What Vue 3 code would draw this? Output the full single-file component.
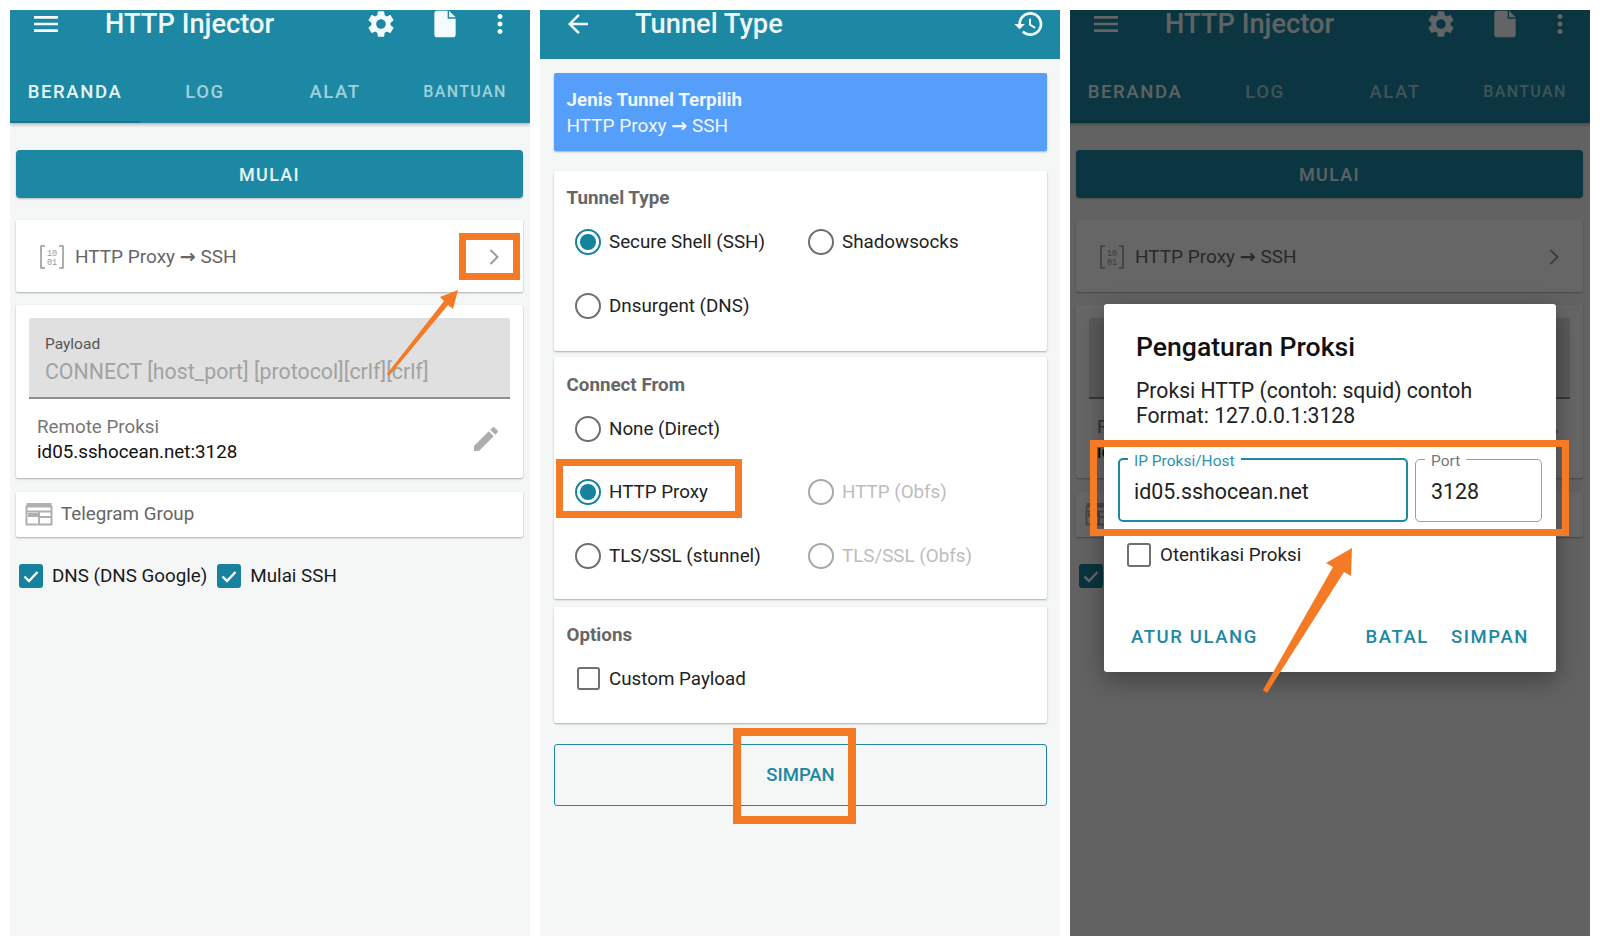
<script setup>
const homePanels = [{ dimmed: false }, { dimmed: true }];
const tabs = ['BERANDA', 'LOG', 'ALAT', 'BANTUAN'];

const icons = {
  menu: 'M3 18h18v-2H3v2zm0-5h18v-2H3v2zm0-7v2h18V6H3z',
  gear: 'M19.14 12.94c.04-.3.06-.61.06-.94 0-.32-.02-.64-.07-.94l2.03-1.58c.18-.14.23-.41.12-.61l-1.92-3.32c-.12-.22-.37-.29-.59-.22l-2.39.96c-.5-.38-1.03-.7-1.62-.94l-.36-2.54c-.04-.24-.24-.41-.48-.41h-3.84c-.24 0-.43.17-.47.41l-.36 2.54c-.59.24-1.13.57-1.62.94l-2.39-.96c-.22-.08-.47 0-.59.22L2.74 8.87c-.12.21-.08.47.12.61l2.03 1.58c-.05.3-.09.63-.09.94s.02.64.07.94l-2.03 1.58c-.18.14-.23.41-.12.61l1.92 3.32c.12.22.37.29.59.22l2.39-.96c.5.38 1.03.7 1.62.94l.36 2.54c.05.24.24.41.48.41h3.84c.24 0 .44-.17.47-.41l.36-2.54c.59-.24 1.13-.56 1.62-.94l2.39.96c.22.08.47 0 .59-.22l1.92-3.32c.12-.22.07-.47-.12-.61l-2.01-1.58zM12 15.6c-1.98 0-3.6-1.62-3.6-3.6s1.62-3.6 3.6-3.6 3.6 1.62 3.6 3.6-1.62 3.6-3.6 3.6z',
  file: 'M6 2c-1.1 0-2 .9-2 2v16c0 1.1.9 2 2 2h12c1.1 0 2-.9 2-2V8h-6V2H6zm9 0v5h5l-5-5z',
  more: 'M12 8c1.1 0 2-.9 2-2s-.9-2-2-2-2 .9-2 2 .9 2 2 2zm0 2c-1.1 0-2 .9-2 2s.9 2 2 2 2-.9 2-2-.9-2-2-2zm0 6c-1.1 0-2 .9-2 2s.9 2 2 2 2-.9 2-2-.9-2-2-2z',
  back: 'M20 11H7.83l5.59-5.59L12 4l-8 8 8 8 1.41-1.41L7.83 13H20v-2z',
  history: 'M13 3c-4.97 0-9 4.03-9 9H1l3.89 3.89.07.14L9 12H6c0-3.87 3.13-7 7-7s7 3.13 7 7-3.13 7-7 7c-1.93 0-3.68-.79-4.94-2.06l-1.42 1.42C8.27 19.99 10.51 21 13 21c4.97 0 9-4.03 9-9s-4.03-9-9-9zm-1 5v5l4.28 2.54.72-1.21-3.5-2.08V8H12z',
  edit: 'M3 17.25V21h3.75L17.81 9.94l-3.75-3.75L3 17.25zM20.71 7.04c.39-.39.39-1.02 0-1.41l-2.34-2.34c-.39-.39-1.02-.39-1.41 0l-1.83 1.83 3.75 3.75 1.83-1.83z',
};

const tunnelTypes = [
  { label: 'Secure Shell (SSH)', checked: true },
  { label: 'Shadowsocks' },
  { label: 'Dnsurgent (DNS)' },
];
const connectFrom = [
  { label: 'None (Direct)', wide: true },
  { label: 'HTTP Proxy', checked: true },
  { label: 'HTTP (Obfs)', disabled: true },
  { label: 'TLS/SSL (stunnel)' },
  { label: 'TLS/SSL (Obfs)', disabled: true },
];
</script>

<template>
  <div class="shots">
    <section
      v-for="panel in homePanels"
      :key="panel.dimmed"
      class="panel"
      :class="panel.dimmed ? 'panel--last' : 'panel--first'"
    >
      <header class="appbar">
        <div class="toolbar">
          <svg class="tool tool--nav" viewBox="0 0 24 24"><path :d="icons.menu" /></svg>
          <h1 class="title">HTTP Injector</h1>
          <svg class="tool tool--gear" viewBox="0 0 24 24"><path :d="icons.gear" /></svg>
          <svg class="tool tool--file" viewBox="0 0 24 24"><path :d="icons.file" /></svg>
          <svg class="tool tool--more" viewBox="0 0 24 24"><path :d="icons.more" /></svg>
        </div>
        <nav class="tabs">
          <span
            v-for="(tab, i) in tabs"
            :key="tab"
            class="tab"
            :class="{ 'tab--active': i === 0, 'tab--small': i === 3 }"
          >{{ tab }}</span>
        </nav>
      </header>

      <div class="home">
        <button class="start">MULAI</button>

        <div class="card tunnel-row">
          <svg class="binary" viewBox="0 0 26 26">
            <path d="M6 2H2v22h4M20 2h4v22h-4" />
            <text x="13" y="11.5" text-anchor="middle">10</text>
            <text x="13" y="20.5" text-anchor="middle">01</text>
          </svg>
          <span class="row-text">HTTP Proxy <span class="to">→</span> SSH</span>
          <svg class="chevron" viewBox="0 0 12 18"><path d="M2.5 2l7 7-7 7" /></svg>
        </div>

        <div class="card proxy-card">
          <div class="payload">
            <span class="payload-label">Payload</span>
            <span class="payload-value">CONNECT [host_port] [protocol][crlf][crlf]</span>
          </div>
          <div class="remote">
            <div>
              <div class="remote-label">Remote Proksi</div>
              <div class="remote-value">id05.sshocean.net:3128</div>
            </div>
            <svg class="pencil" viewBox="0 0 24 24"><path :d="icons.edit" /></svg>
          </div>
        </div>

        <div class="card group-row">
          <svg class="group-icon" viewBox="0 0 28 24">
            <path d="M1.5 4.5h25v18h-25zM1.5 9.5h25M14 15h12.5M14 9.5v13" />
            <path class="group-fill" d="M3 11h10v4H3zM1.5 1h25v3h-25z" />
          </svg>
          <span class="row-text">Telegram Group</span>
        </div>

        <div class="checks">
          <span class="check check--on">
            <svg viewBox="0 0 24 24"><path d="M5.5 12.5l4.5 4.5 8.5-9" /></svg>
          </span>
          <span class="check-label">DNS (DNS Google)</span>
          <span class="check check--on">
            <svg viewBox="0 0 24 24"><path d="M5.5 12.5l4.5 4.5 8.5-9" /></svg>
          </span>
          <span class="check-label">Mulai SSH</span>
        </div>
      </div>

      <template v-if="!panel.dimmed">
        <div class="mark mark--chevron"></div>
        <svg class="arrow" viewBox="0 0 520 926">
          <path d="M377 364L379 366L438 295L443 299L448 280L430 287L434 291Z" />
        </svg>
      </template>

      <template v-else>
        <div class="scrim"></div>
        <div class="dialog">
          <h2 class="dialog-title">Pengaturan Proksi</h2>
          <p class="dialog-text">Proksi HTTP (contoh: squid) contoh<br />Format: 127.0.0.1:3128</p>
          <div class="fields">
            <fieldset class="field field--focus">
              <legend>IP Proksi/Host</legend>
              <span>id05.sshocean.net</span>
            </fieldset>
            <fieldset class="field field--port">
              <legend>Port</legend>
              <span>3128</span>
            </fieldset>
          </div>
          <div class="auth">
            <span class="check"></span>
            <span class="auth-label">Otentikasi Proksi</span>
          </div>
          <div class="actions">
            <span>ATUR ULANG</span>
            <span class="actions-right"><span>BATAL</span><span>SIMPAN</span></span>
          </div>
        </div>
        <div class="mark mark--fields"></div>
        <svg class="arrow" viewBox="0 0 520 926">
          <path d="M193 680L197 683L274 562L281 566L282 538L256 553L263 557Z" />
        </svg>
      </template>
    </section>

    <section class="panel panel--middle">
      <header class="appbar appbar--plain">
        <div class="toolbar">
          <svg class="tool tool--back" viewBox="0 0 24 24"><path :d="icons.back" /></svg>
          <h1 class="title">Tunnel Type</h1>
          <svg class="tool tool--history" viewBox="0 0 24 24"><path :d="icons.history" /></svg>
        </div>
      </header>

      <div class="tunnel">
        <div class="selected">
          <strong>Jenis Tunnel Terpilih</strong>
          <span>HTTP Proxy <span class="to">→</span> SSH</span>
        </div>

        <div class="card group group--types">
          <h3 class="group-title">Tunnel Type</h3>
          <div class="options">
            <label
              v-for="item in tunnelTypes"
              :key="item.label"
              class="option"
            >
              <span class="radio" :class="{ 'radio--on': item.checked }"></span>
              {{ item.label }}
            </label>
          </div>
        </div>

        <div class="card group group--connect">
          <h3 class="group-title">Connect From</h3>
          <div class="options">
            <label
              v-for="item in connectFrom"
              :key="item.label"
              class="option"
              :class="{ 'option--wide': item.wide, 'option--off': item.disabled }"
            >
              <span class="radio" :class="{ 'radio--on': item.checked }"></span>
              {{ item.label }}
            </label>
          </div>
        </div>

        <div class="card group group--options">
          <h3 class="group-title">Options</h3>
          <div class="options">
            <label class="option option--wide">
              <span class="check check--box"></span>
              Custom Payload
            </label>
          </div>
        </div>

        <button class="save">SIMPAN</button>
      </div>

      <div class="mark mark--http"></div>
      <div class="mark mark--save"></div>
    </section>
  </div>
</template>

<style>
html,
body {
  margin: 0;
  background: #fff;
}
</style>

<style scoped>
.shots {
  display: flex;
  gap: 10px;
  width: 1600px;
  height: 945px;
  padding: 10px;
  box-sizing: border-box;
  font-family: Roboto, "Liberation Sans", sans-serif;
}

.panel {
  position: relative;
  width: 520px;
  height: 926px;
  background: #f5f6f6;
  overflow: hidden;
}

.panel--first {
  order: 0;
}

.panel--middle {
  order: 1;
}

.panel--last {
  order: 2;
}

.appbar {
  background: #1d88a3;
  box-shadow: 0 2px 3px rgba(0, 0, 0, 0.25);
  overflow: hidden;
}

.appbar--plain {
  height: 49px;
  box-shadow: none;
}

.toolbar {
  display: flex;
  align-items: center;
  height: 28px;
  color: #fff;
}

.tool {
  flex: none;
  fill: #f4fbfc;
}

.tool--nav {
  width: 32px;
  height: 32px;
  margin: 0 43px 0 20px;
}

.tool--back {
  width: 30px;
  height: 30px;
  margin: 0 42px 0 23px;
}

.title {
  margin: 0;
  flex: 1;
  font-size: 27.3px;
  font-weight: 500;
  line-height: 28px;
  color: #eef8fa;
}

.tool--gear {
  width: 32px;
  height: 32px;
  margin-right: 32.5px;
}

.tool--file {
  width: 32px;
  height: 34px;
  margin-right: 24px;
}

.tool--more {
  width: 30px;
  height: 30px;
  margin-right: 15px;
}

.tool--history {
  width: 32px;
  height: 32px;
  margin-right: 15px;
}

.tabs {
  display: grid;
  grid-template-columns: repeat(4, 1fr);
  height: 84.5px;
}

.tab {
  display: flex;
  align-items: center;
  justify-content: center;
  padding-top: 25px;
  box-sizing: border-box;
  font-size: 18.5px;
  font-weight: 500;
  letter-spacing: 1.6px;
  color: #9fd0dc;
  border-bottom: 2px solid transparent;
}

.tab--active {
  color: #e8f5f8;
  border-bottom-color: #18758d;
}

.tab--small {
  font-size: 16px;
  letter-spacing: 1.4px;
}

.home {
  padding: 27.5px 7px 0 6px;
}

.start {
  display: block;
  width: 100%;
  height: 48px;
  border: none;
  border-radius: 4px;
  background: #1d88a3;
  color: #e6f4f7;
  font: 500 18px Roboto, sans-serif;
  letter-spacing: 1.3px;
  box-shadow: 0 1px 2px rgba(0, 0, 0, 0.25);
}

.card {
  background: #fff;
  border-radius: 2px;
  box-shadow: 0 1px 2px rgba(0, 0, 0, 0.3);
  box-sizing: border-box;
}

.tunnel-row {
  display: flex;
  align-items: center;
  height: 72.5px;
  margin-top: 21.5px;
  padding: 2px 23px 0 23px;
}

.binary {
  width: 26px;
  height: 26px;
  margin-right: 10px;
}

.binary path {
  fill: none;
  stroke: #9a9a9a;
  stroke-width: 1.6;
}

.binary text {
  font: 8.5px "Liberation Mono", monospace;
  fill: #9a9a9a;
}

.row-text {
  flex: 1;
  font-size: 19px;
  color: #666;
}

.to {
  font-family: "DejaVu Sans", sans-serif;
  font-weight: 700;
  font-size: 19px;
  line-height: 1;
}

.chevron {
  width: 12px;
  height: 18px;
  fill: none;
  stroke: #9b9b9b;
  stroke-width: 2;
}

.proxy-card {
  height: 172.5px;
  margin-top: 13px;
  padding: 13px 13px 0;
}

.payload {
  display: flex;
  flex-direction: column;
  height: 81px;
  padding: 17px 16px 0;
  box-sizing: border-box;
  background: #e0e0e0;
  border-radius: 3px 3px 0 0;
  border-bottom: 2px solid #8d8d8d;
}

.payload-label {
  font-size: 15.5px;
  line-height: 18px;
  color: #555;
}

.payload-value {
  margin-top: 6px;
  font-size: 21.3px;
  line-height: 26px;
  color: #a2a2a2;
  white-space: nowrap;
}

.remote {
  display: flex;
  align-items: center;
  justify-content: space-between;
  padding: 15px 8px 0 8px;
}

.remote-label {
  font-size: 18.8px;
  line-height: 26px;
  color: #777;
}

.remote-value {
  font-size: 18.8px;
  line-height: 25px;
  color: #111;
}

.pencil {
  width: 32px;
  height: 32px;
  margin-top: -2px;
  fill: #adadad;
}

.group-row {
  display: flex;
  align-items: center;
  height: 45px;
  margin-top: 14px;
  padding-left: 9px;
}

.group-icon {
  width: 28px;
  height: 24px;
  margin-right: 8px;
  fill: none;
  stroke: #b0b0b0;
  stroke-width: 2;
}

.group-fill {
  fill: #b0b0b0;
  stroke: none;
}

.group-row .row-text {
  font-size: 18.8px;
}

.checks {
  display: flex;
  align-items: center;
  margin: 27px 0 0 3px;
}

.check {
  flex: none;
  width: 24px;
  height: 24px;
  box-sizing: border-box;
  border: 2.5px solid #707070;
  border-radius: 3px;
}

.check--on {
  background: #17829e;
  border: none;
}

.check--on svg {
  display: block;
  fill: none;
  stroke: #fff;
  stroke-width: 2.4;
}

.check-label {
  margin: 0 10px 0 9px;
  font-size: 18.8px;
  color: #1a1a1a;
}

.tunnel {
  padding: 13.5px 13px 0 14px;
}

.selected {
  display: flex;
  flex-direction: column;
  justify-content: center;
  height: 78.5px;
  padding: 2px 13px 0 12.5px;
  box-sizing: border-box;
  background: #559ffb;
  border-radius: 2px;
  box-shadow: 0 1px 2px rgba(0, 0, 0, 0.3);
  color: #f0f6ff;
  font-size: 19px;
  line-height: 25px;
}

.selected strong {
  font-size: 18.8px;
  font-weight: 700;
}

.group {
  padding: 16.5px 21px 0 21px;
}

.group-title {
  margin: 0 0 0 -8.5px;
  font-size: 18.8px;
  font-weight: 700;
  line-height: 22px;
  color: #666;
}

.group--types {
  height: 180.5px;
  margin-top: 19.5px;
}

.group--connect {
  height: 242px;
  margin-top: 6px;
}

.group--options {
  height: 115.5px;
  margin-top: 8px;
}

.options {
  display: grid;
  grid-template-columns: 233px 1fr;
  grid-auto-rows: 63.5px;
  margin-top: 1.5px;
}

.option {
  display: flex;
  align-items: center;
  gap: 8px;
  font-size: 18.8px;
  color: #222;
}

.option--wide {
  grid-column: 1 / -1;
}

.option--off {
  color: #bdbdbd;
}

.radio {
  position: relative;
  flex: none;
  width: 26px;
  height: 26px;
  box-sizing: border-box;
  border: 2.8px solid #6f6f6f;
  border-radius: 50%;
}

.option--off .radio {
  border-color: #a8a8a8;
}

.radio--on {
  border-color: #17829e;
}

.radio--on::after {
  content: "";
  position: absolute;
  inset: 3.2px;
  border-radius: 50%;
  background: #17829e;
}

.check--box {
  width: 23px;
  height: 23px;
  margin: 0 1.5px;
}

.save {
  display: block;
  width: 100%;
  height: 62px;
  margin-top: 21.5px;
  border: 1.5px solid #1d88a3;
  border-radius: 3px;
  background: transparent;
  color: #1d88a3;
  font: 500 18.5px Roboto, sans-serif;
}

.scrim {
  position: absolute;
  inset: 0;
  background: rgba(0, 0, 0, 0.6);
}

.dialog {
  position: absolute;
  left: 34px;
  top: 294px;
  width: 452px;
  height: 368px;
  padding: 27px 14px 0;
  box-sizing: border-box;
  background: #fff;
  border-radius: 3px;
  box-shadow: 0 8px 24px rgba(0, 0, 0, 0.35);
}

.dialog-title {
  margin: 0 0 0 18px;
  font-size: 26.6px;
  font-weight: 500;
  line-height: 32px;
  color: #111;
}

.dialog-text {
  margin: 15px 0 0 18px;
  font-size: 21.2px;
  line-height: 25px;
  color: #222;
}

.fields {
  display: flex;
  gap: 7px;
  margin-top: 22px;
}

.field {
  height: 72px;
  margin: 0;
  padding: 0 14px;
  box-sizing: border-box;
  border: 1.5px solid #9e9e9e;
  border-radius: 5px;
  font-size: 21.4px;
  color: #222;
}

.field span {
  display: block;
  margin-top: 7px;
  line-height: 34px;
}

.field legend {
  position: relative;
  top: 1.5px;
  margin-left: -6px;
  padding: 0 6px;
  font-size: 15.5px;
  line-height: 18px;
  color: #777;
}

.field--focus {
  width: 290px;
  border: 2.5px solid #1d88a3;
}

.field--focus legend {
  color: #2d93ac;
}

.field--port {
  width: 127px;
  padding: 0 15px;
}

.auth {
  display: flex;
  align-items: center;
  margin: 21px 0 0 9px;
}

.auth-label {
  margin-left: 9px;
  font-size: 18.8px;
  color: #222;
}

.actions {
  display: flex;
  justify-content: space-between;
  margin: 59px 13px 0 13px;
  font-size: 18.5px;
  font-weight: 500;
  letter-spacing: 1.6px;
  color: #1d88a3;
}

.actions-right {
  display: flex;
  gap: 22px;
}

.mark {
  position: absolute;
  box-sizing: border-box;
  border: 7px solid #f47a25;
}

.mark--chevron {
  left: 449px;
  top: 223px;
  width: 61px;
  height: 47px;
}

.mark--fields {
  left: 20px;
  top: 430px;
  width: 479px;
  height: 96px;
}

.mark--http {
  left: 16px;
  top: 449px;
  width: 186px;
  height: 59px;
}

.mark--save {
  left: 193px;
  top: 718px;
  width: 123px;
  height: 96px;
  border-width: 8px;
}

.arrow {
  position: absolute;
  left: 0;
  top: 0;
  width: 520px;
  height: 926px;
  fill: #f47a25;
  pointer-events: none;
}
</style>
